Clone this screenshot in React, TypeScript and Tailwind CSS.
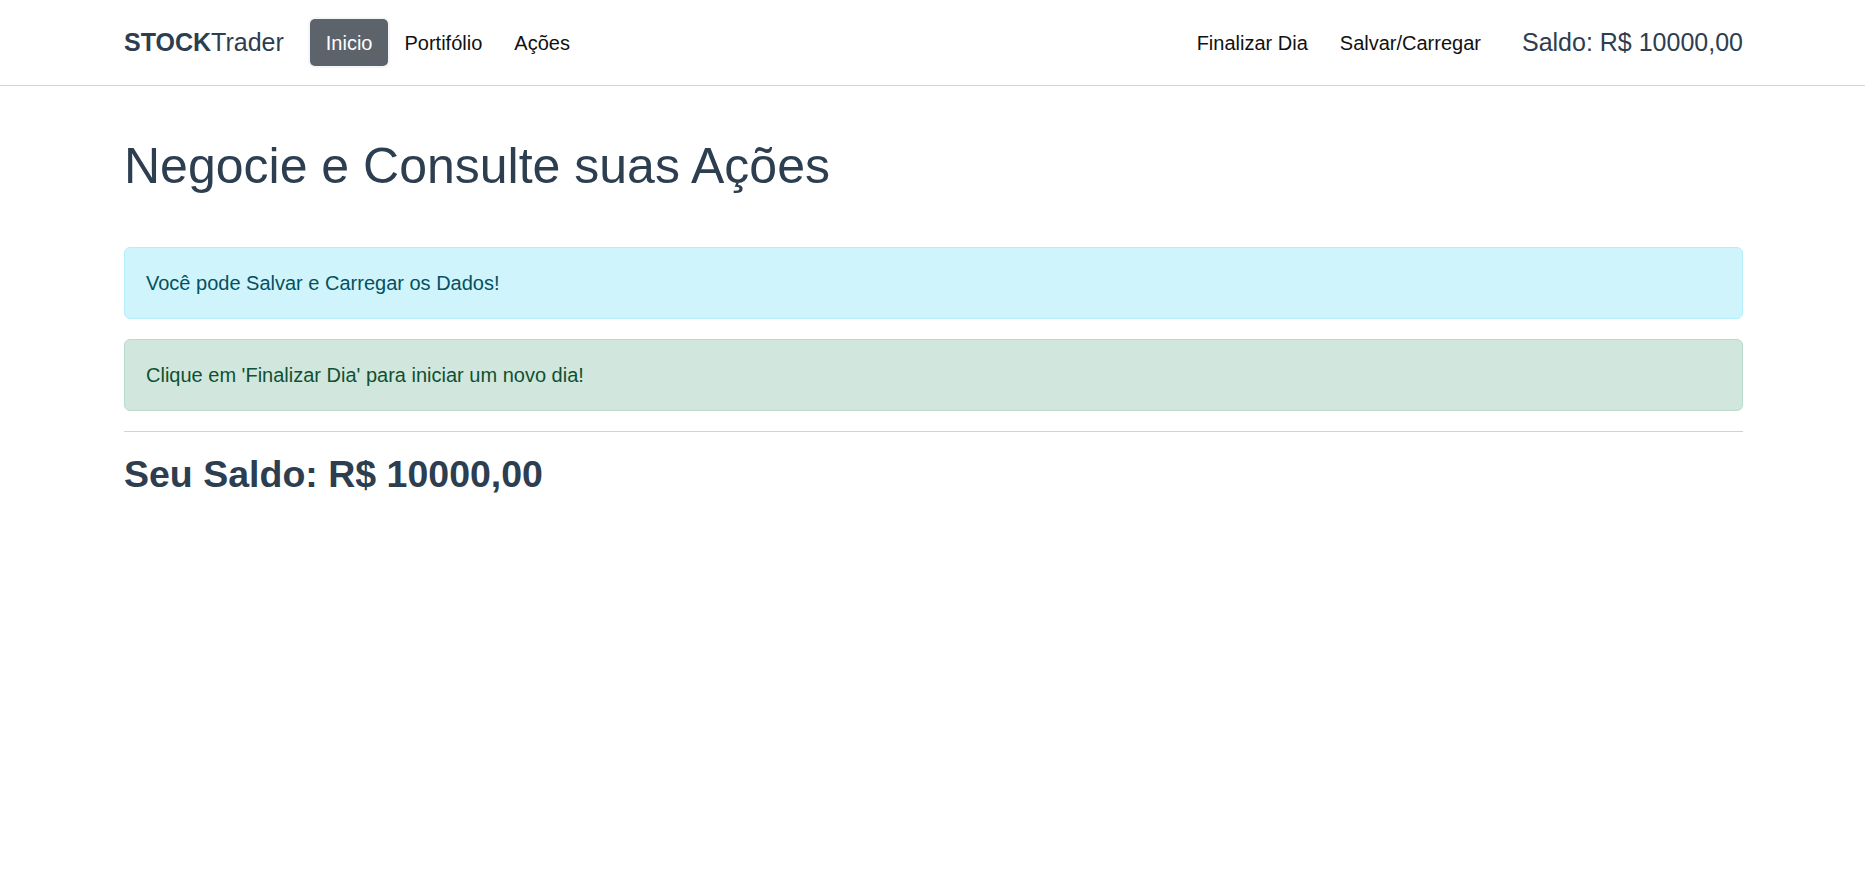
import React from 'react';

const NavLink: React.FC<{ label: string; active?: boolean }> = ({ label, active }) => (
  <a
    href="#"
    className={`px-4 py-[8.5px] text-[20px] leading-[30px] rounded-[5px] ${
      active ? 'bg-[#5c636a] text-white ring-2 ring-[#f4f6f8]' : 'text-[#111]'
    }`}
  >
    {label}
  </a>
);

const App: React.FC = () => {
  const saldo = 'R$ 10000,00';

  return (
    <div className="min-h-screen bg-white font-['Liberation_Sans',Arial,sans-serif] text-[#2c3e50]">
      {/* Navbar */}
      <nav className="h-[86px] border-b border-[#d4d4d8]">
        <div className="h-full pl-[124px] pr-[122px] flex items-center">
          <a href="#" className="text-[25px] leading-[37.5px] text-[#2c3e50] mr-[26px]">
            <span className="font-bold">STOCK</span>Trader
          </a>
          <div className="flex items-center">
            <NavLink label="Inicio" active />
            <NavLink label="Portifólio" />
            <NavLink label="Ações" />
          </div>
          <div className="ml-auto flex items-center">
            <NavLink label="Finalizar Dia" />
            <NavLink label="Salvar/Carregar" />
            <span className="ml-[25px] text-[25px] leading-[37.5px] text-[#2c3e50]">Saldo: {saldo}</span>
          </div>
        </div>
      </nav>

      {/* Main */}
      <main className="pl-[124px] pr-[122px]">
        <h1 className="mt-[50px] mb-[51px] text-[50px] leading-[60px] font-normal">
          Negocie e Consulte suas Ações
        </h1>

        <div className="mb-[20px] h-[72px] px-[21px] flex items-center rounded-[6px] border border-[#b6effb] bg-[#cff4fc] text-[#055160] text-[20px] leading-[30px]">
          Você pode Salvar e Carregar os Dados!
        </div>
        <div className="h-[72px] px-[21px] flex items-center rounded-[6px] border border-[#badbcc] bg-[#d1e7dd] text-[#0f5132] text-[20px] leading-[30px]">
          Clique em 'Finalizar Dia' para iniciar um novo dia!
        </div>

        <hr className="mt-[20px] border-t border-[#cfd2d6]" />

        <h2 className="mt-[20px] text-[37.5px] leading-[45px] font-bold">Seu Saldo: {saldo}</h2>
      </main>
    </div>
  );
};

export default App;
